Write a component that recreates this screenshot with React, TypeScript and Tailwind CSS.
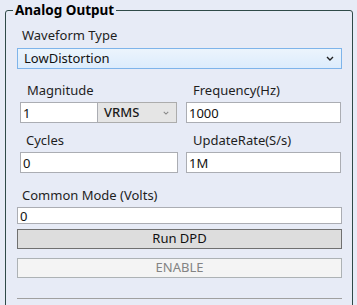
const font = { fontFamily: '"Noto Sans", "Open Sans", sans-serif' };

function Chevron({ className }: { className: string }) {
  return (
    <svg viewBox="0 0 8 5" className={className} fill="none" stroke="currentColor" strokeWidth="1.4">
      <path d="M1 1l3 3 3-3" />
    </svg>
  );
}

function Field({ value, className }: { value: string; className: string }) {
  return (
    <div className={`flex items-center border border-[#abadb3] bg-white pl-[2px] text-[13px] leading-[16px] text-[#111] ${className}`}>
      {value}
    </div>
  );
}

export default function App() {
  return (
    <div className="h-[305px] w-[357px] overflow-hidden bg-[#e7ebf6]" style={font}>
      <fieldset className="ml-[5px] w-[348px] rounded-[3px] border border-[#2f4a48] p-0 h-[330px]">
        <legend className="ml-[7px] px-[2px] text-[13.5px] font-bold leading-[20px] text-black">Analog Output</legend>

        <div className="pl-[11px] pr-[10px]">
          <div className="mt-[7px] pl-[5px] text-[13px] leading-[16px] text-[#1e1e1e]">Waveform Type</div>
          <div className="mt-[5px] flex h-[21px] items-center justify-between border border-[#7eb4ea] bg-gradient-to-b from-[#ecf4fc] to-[#dcecfc] pl-[6px] pr-[7px] text-[13px] text-[#111]">
            <span>LowDistortion</span>
            <Chevron className="h-[5px] w-[8px] text-[#222]" />
          </div>

          <div className="mt-[13px] grid grid-cols-[158px_155px] gap-x-[8px] pl-[3px]">
            <div>
              <div className="pl-[7px] text-[13px] leading-[16px] text-[#1e1e1e]">Magnitude</div>
              <div className="mt-[4px] flex h-[21px]">
                <Field value="1" className="w-[78px]" />
                <div className="flex w-[79px] items-center justify-between border border-l-0 border-[#acacac] bg-[#e5e5e5] pl-[6px] pr-[7px] text-[13px] font-medium text-[#1a1a1a]">
                  <span>VRMS</span>
                  <Chevron className="h-[4px] w-[6px] text-[#888]" />
                </div>
              </div>
            </div>
            <div>
              <div className="pl-[7px] text-[13px] leading-[16px] text-[#1e1e1e]">Frequency(Hz)</div>
              <Field value="1000" className="mt-[4px] h-[21px]" />
            </div>

            <div className="mt-[9px]">
              <div className="pl-[6px] text-[13px] leading-[16px] text-[#1e1e1e]">Cycles</div>
              <Field value="0" className="mt-[4px] h-[21px]" />
            </div>
            <div className="mt-[9px]">
              <div className="pl-[7px] text-[13px] leading-[16px] text-[#1e1e1e]">UpdateRate(S/s)</div>
              <Field value="1M" className="mt-[4px] h-[21px]" />
            </div>
          </div>

          <div className="mt-[14px] pl-[5px] text-[13px] leading-[16px] text-[#1e1e1e]">Common Mode (Volts)</div>
          <Field value="0" className="mt-[4px] h-[17px]" />

          <button className="mt-[5px] flex h-[20px] w-full items-center justify-center border border-[#707070] bg-[#dddddd] text-[13px] text-[#111]">
            Run DPD
          </button>
          <button className="mt-[9px] flex h-[20px] w-full items-center justify-center border border-[#adb2b5] bg-[#f4f4f4] text-[13px] text-[#838383]">
            ENABLE
          </button>

          <div className="mt-[20px] h-px bg-[#a0a0a0]" />
        </div>
      </fieldset>
    </div>
  );
}
